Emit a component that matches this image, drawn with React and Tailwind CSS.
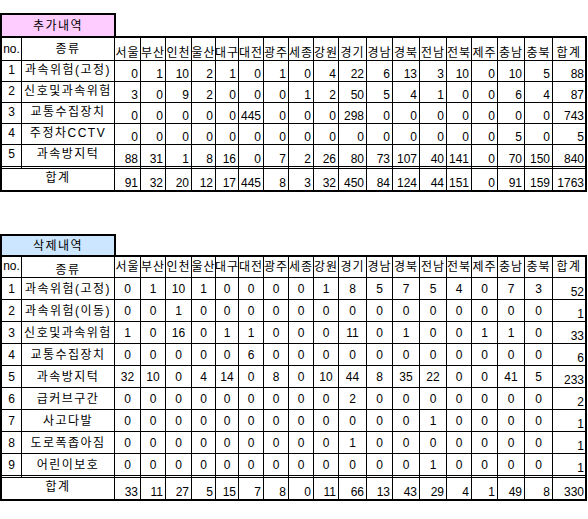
import clsx from "clsx";

const regions = ["서울", "부산", "인천", "울산", "대구", "대전", "광주", "세종", "강원", "경기", "경남", "경북", "전남", "전북", "제주", "충남", "충북"];

const added = [
  ["과속위험(고정)", [0, 1, 10, 2, 1, 0, 1, 0, 4, 22, 6, 13, 3, 10, 0, 10, 5], 88],
  ["신호및과속위험", [3, 0, 9, 2, 0, 0, 0, 1, 2, 50, 5, 4, 1, 0, 0, 6, 4], 87],
  ["교통수집장치", [0, 0, 0, 0, 0, 445, 0, 0, 0, 298, 0, 0, 0, 0, 0, 0, 0], 743],
  ["주정차CCTV", [0, 0, 0, 0, 0, 0, 0, 0, 0, 0, 0, 0, 0, 0, 0, 5, 0], 5],
  ["과속방지턱", [88, 31, 1, 8, 16, 0, 7, 2, 26, 80, 73, 107, 40, 141, 0, 70, 150], 840],
];
const addedTotal = [[91, 32, 20, 12, 17, 445, 8, 3, 32, 450, 84, 124, 44, 151, 0, 91, 159], 1763];

const removed = [
  ["과속위험(고정)", [0, 1, 10, 1, 0, 0, 0, 0, 1, 8, 5, 7, 5, 4, 0, 7, 3], 52],
  ["과속위험(이동)", [0, 0, 1, 0, 0, 0, 0, 0, 0, 0, 0, 0, 0, 0, 0, 0, 0], 1],
  ["신호및과속위험", [1, 0, 16, 0, 1, 1, 0, 0, 0, 11, 0, 1, 0, 0, 1, 1, 0], 33],
  ["교통수집장치", [0, 0, 0, 0, 0, 6, 0, 0, 0, 0, 0, 0, 0, 0, 0, 0, 0], 6],
  ["과속방지턱", [32, 10, 0, 4, 14, 0, 8, 0, 10, 44, 8, 35, 22, 0, 0, 41, 5], 233],
  ["급커브구간", [0, 0, 0, 0, 0, 0, 0, 0, 0, 2, 0, 0, 0, 0, 0, 0, 0], 2],
  ["사고다발", [0, 0, 0, 0, 0, 0, 0, 0, 0, 0, 0, 0, 1, 0, 0, 0, 0], 1],
  ["도로폭좁아짐", [0, 0, 0, 0, 0, 0, 0, 0, 0, 1, 0, 0, 0, 0, 0, 0, 0], 1],
  ["어린이보호", [0, 0, 0, 0, 0, 0, 0, 0, 0, 0, 0, 0, 1, 0, 0, 0, 0], 1],
];
const removedTotal = [[33, 11, 27, 5, 15, 7, 8, 0, 11, 66, 13, 43, 29, 4, 1, 49, 8], 330];

function Cell({ children, last, className }) {
  return (
    <div className={clsx("flex overflow-visible whitespace-nowrap border-black", !last && "border-r", className)}>
      {children}
    </div>
  );
}

function Sheet({ title, titleBg, rows, total, variant }) {
  const top = variant === "top";
  const headH = top ? "h-[23px]" : "h-[21px]";
  const rowH = top ? "h-[21px]" : "h-[22px]";
  const lastH = "h-[24px]";

  return (
    <div>
      <div className={clsx("w-[116px] border-2 border-b-0 border-black flex items-center justify-center tracking-[1.5px]", titleBg, top ? "h-[23px]" : "h-[21px]")}>
        {title}
      </div>
      <div className="w-[587px] border-2 border-black grid grid-cols-[20px_93px_26px_25px_26px_24px_23px_25px_25px_25px_25px_28px_26px_27px_27px_25px_26px_27px_28px_32px]">
        {/* header */}
        <Cell className={clsx(headH, "border-b justify-center", top ? "items-center" : "items-start pt-[2px]")}>no.</Cell>
        <Cell className={clsx(headH, "border-b justify-center tracking-[1.5px]", top ? "items-center" : "items-end")}>종류</Cell>
        {regions.map((r) => (
          <Cell key={r} className={clsx(headH, "border-b justify-center tracking-[1px]", top ? "items-end" : "items-center")}>
            {r}
          </Cell>
        ))}
        <Cell last className={clsx(headH, "border-b justify-center tracking-[1.5px]", top ? "items-end" : "items-center")}>합계</Cell>

        {rows.map(([label, vals, sum], i) => {
          const isLast = i === rows.length - 1;
          const h = isLast ? lastH + " border-b-[3px] [border-bottom-style:double]" : rowH + " border-b";
          return [
            <Cell key={"n" + i} className={clsx(h, "justify-center", top ? "items-center pb-[3px]" : "items-center")}>
              {i + 1}
            </Cell>,
            <Cell key={"l" + i} className={clsx(h, "justify-center tracking-[1.5px]", top ? "items-center pb-[3px]" : "items-center")}>
              {label}
            </Cell>,
            ...vals.map((v, j) => (
              <Cell key={i + "-" + j} className={clsx(h, top ? "items-end justify-end pr-[2px]" : "items-center justify-center")}>
                {v}
              </Cell>
            )),
            <Cell key={"s" + i} last className={clsx(h, "items-end justify-end pr-[1px]")}>
              {sum}
            </Cell>,
          ];
        })}

        <Cell className="col-span-2 h-[21px] justify-center items-center pb-[3px] tracking-[1.5px]">합계</Cell>
        {total[0].map((v, j) => (
          <Cell key={"t" + j} className="h-[21px] items-end justify-end pr-[2px]">
            {v}
          </Cell>
        ))}
        <Cell last className="h-[21px] items-end justify-end pr-[1px]">
          {total[1]}
        </Cell>
      </div>
    </div>
  );
}

export default function App() {
  return (
    <div className="w-[588px] h-[519px] bg-white text-black text-[12px] leading-[14px] font-['Liberation_Sans','Noto_Sans_CJK_KR',sans-serif] pt-[13px] overflow-hidden">
      <Sheet title="추가내역" titleBg="bg-[#ffccff]" rows={added} total={addedTotal} variant="top" />
      <div className="mt-[42px]">
        <Sheet title="삭제내역" titleBg="bg-[#cce6ff]" rows={removed} total={removedTotal} variant="bottom" />
      </div>
    </div>
  );
}
